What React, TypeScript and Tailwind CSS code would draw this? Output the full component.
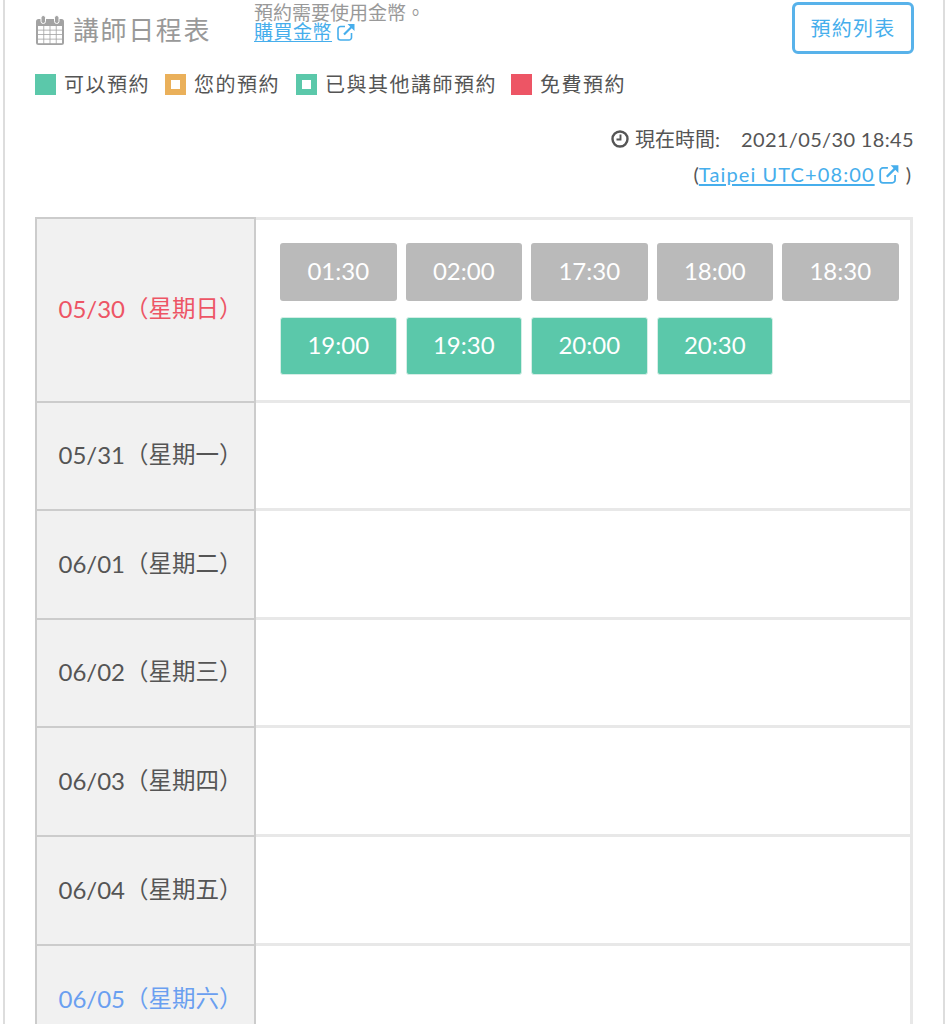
import { ReactNode } from "react";

const latin = "font-['Lato','Noto_Sans_CJK_TC',sans-serif]";

const grayTimes = ["01:30", "02:00", "17:30", "18:00", "18:30"];
const greenTimes = ["19:00", "19:30", "20:00", "20:30"];

const days = [
  { label: "05/31", week: "（星期一）", height: "h-[108px]", color: "text-[#555555]" },
  { label: "06/01", week: "（星期二）", height: "h-[109px]", color: "text-[#555555]" },
  { label: "06/02", week: "（星期三）", height: "h-[108px]", color: "text-[#555555]" },
  { label: "06/03", week: "（星期四）", height: "h-[109px]", color: "text-[#555555]" },
  { label: "06/04", week: "（星期五）", height: "h-[109px]", color: "text-[#555555]" },
  { label: "06/05", week: "（星期六）", height: "h-[109px]", color: "text-[#6a9ff0]" },
];

function ExternalIcon({ className }: { className?: string }) {
  return (
    <svg viewBox="0 0 20 20" fill="none" stroke="currentColor" strokeWidth="1.6" className={className}>
      <path d="M15.5 11v4.5a2.5 2.5 0 0 1-2.5 2.5H4.5A2.5 2.5 0 0 1 2 15.5V7a2.500 2.500 0 0 1 2.500-2.500H9" />
      <path d="M8 12.500 16 4.500" strokeWidth="2.200" />
      <path d="M11.500 2H18.500V9Z" fill="currentColor" stroke="none" />
    </svg>
  );
}

function CalendarIcon() {
  return (
    <svg viewBox="0 0 30 30" className="h-[30px] w-[30px] shrink-0 text-[#a3a3a3]" fill="currentColor">
      <rect x="1" y="4" width="28" height="26" rx="2.500" />
      <rect x="6" y="0.500" width="4.500" height="8" rx="2.200" stroke="#fff" strokeWidth="1" />
      <rect x="19.500" y="0.500" width="4.500" height="8" rx="2.200" stroke="#fff" strokeWidth="1" />
      <g fill="#fff">
        {[11, 15.500, 20, 24.500].map((y) =>
          [3, 9.200, 15.400, 21.600].map((x) => <rect key={`${x}-${y}`} x={x} y={y} width="5.400" height="3.700" />),
        )}
      </g>
    </svg>
  );
}

function ClockIcon() {
  return (
    <svg viewBox="0 0 18 18" fill="none" stroke="#555555" className="h-[18px] w-[18px] shrink-0">
      <circle cx="9" cy="9" r="7.500" strokeWidth="2.400" />
      <path d="M9.500 4.500V9.500H5.500" strokeWidth="1.900" />
    </svg>
  );
}

function Legend({ box, children, className }: { box: ReactNode; children: ReactNode; className?: string }) {
  return (
    <div className={`flex items-center gap-2 ${className ?? ""}`}>
      {box}
      <span>{children}</span>
    </div>
  );
}

function TimeSlot({ time, active }: { time: string; active?: boolean }) {
  return (
    <div
      className={`flex h-[58px] w-[116.500px] items-center justify-center rounded-[3px] pb-[2px] text-[24px] text-white ${
        active ? "border border-[#d5eee6] bg-[#5bc8aa]" : "bg-[#bababa]"
      }`}
    >
      {time}
    </div>
  );
}

function DateCell({
  label,
  week,
  color,
  className,
}: {
  label: string;
  week: string;
  color: string;
  className?: string;
}) {
  return (
    <div
      className={`flex w-[221px] shrink-0 items-center justify-center border-x-2 border-b-2 border-[#cccccc] bg-[#f1f1f1] pb-[2px] pl-[10px] text-[24px] ${color} ${className ?? ""}`}
    >
      {label}
      <span className="text-[23.500px]">{week}</span>
    </div>
  );
}

export default function App() {
  return (
    <div className={`h-[1024px] overflow-hidden bg-white ${latin}`}>
      <div className="ml-[3px] mr-[7px] h-full border-x-2 border-[#dddddd] pl-[30px] pr-[29px]">
        <div className="flex h-[66px] items-start justify-between">
          <div className="flex items-start">
            <div className="mt-[13px] flex items-center gap-2 text-[26px] leading-[34px] text-[#999999]">
              <CalendarIcon />
              <span className="tracking-[1.600px]">講師日程表</span>
            </div>
            <div className="ml-[43px] pt-[3px] text-[19px] text-[#999999]">
              <div className="whitespace-nowrap leading-[19px]">預約需要使用金幣。</div>
              <div className="flex items-center gap-1 leading-[20px] text-[#46aeec]">
                <span className="tracking-[0.500px] underline underline-offset-2">購買金幣</span>
                <ExternalIcon className="h-5 w-5" />
              </div>
            </div>
          </div>
          <button className="mt-[2px] flex h-[52px] w-[122px] items-center justify-center rounded-md border-[3px] border-[#58b2ea] text-[20px] tracking-[1.200px] text-[#46aeec]">
            預約列表
          </button>
        </div>

        <div className="mt-[3px] flex h-[30px] items-center text-[20px] tracking-[1.500px] text-[#555555]">
          <Legend className="w-[130px]" box={<span className="h-[21px] w-[21px] bg-[#5bc8aa]" />}>
            可以預約
          </Legend>
          <Legend
            className="w-[131px]"
            box={<span className="h-[21px] w-[21px] border-[6px] border-[#eab05a] bg-white" />}
          >
            您的預約
          </Legend>
          <Legend
            className="w-[215px]"
            box={<span className="h-[21px] w-[21px] border-[6px] border-[#5bc8aa] bg-white" />}
          >
            已與其他講師預約
          </Legend>
          <Legend box={<span className="h-[21px] w-[21px] bg-[#ed5565]" />}>免費預約</Legend>
        </div>

        <div className="mt-[26px] flex h-[28px] items-center justify-end text-[20px] text-[#555555]">
          <ClockIcon />
          <span className="ml-1.5 whitespace-nowrap">現在時間:</span>
          <span className="ml-[21px] whitespace-nowrap tracking-[0.350px]">2021/05/30 18:45</span>
        </div>
        <div className="mt-[7px] flex h-[28px] items-center justify-end pr-[3px] text-[20px] text-[#555555]">
          <span>(</span>
          <span className="tracking-[1.100px] text-[#46aeec] underline underline-offset-2">Taipei UTC+08:00</span>
          <ExternalIcon className="ml-[3px] h-[22px] w-[22px] text-[#46aeec]" />
          <span className="ml-1.5">)</span>
        </div>

        <div className="mt-[29px] w-[878px]">
          <div className="flex h-[186px]">
            <DateCell label="05/30" week="（星期日）" color="text-[#ed5565]" className="border-t-2" />
            <div className="flex-1 border-y-[3px] border-r-[3px] border-[#e8e8e8] pl-[24px] pt-[23px]">
              <div className="flex flex-wrap gap-x-[9px] gap-y-[16px]">
                {grayTimes.map((t) => (
                  <TimeSlot key={t} time={t} />
                ))}
                {greenTimes.map((t) => (
                  <TimeSlot key={t} time={t} active />
                ))}
              </div>
            </div>
          </div>
          {days.map((d) => (
            <div key={d.label} className={`flex ${d.height}`}>
              <DateCell label={d.label} week={d.week} color={d.color} />
              <div className="flex-1 border-b-[3px] border-r-[3px] border-[#e8e8e8]" />
            </div>
          ))}
        </div>
      </div>
    </div>
  );
}
